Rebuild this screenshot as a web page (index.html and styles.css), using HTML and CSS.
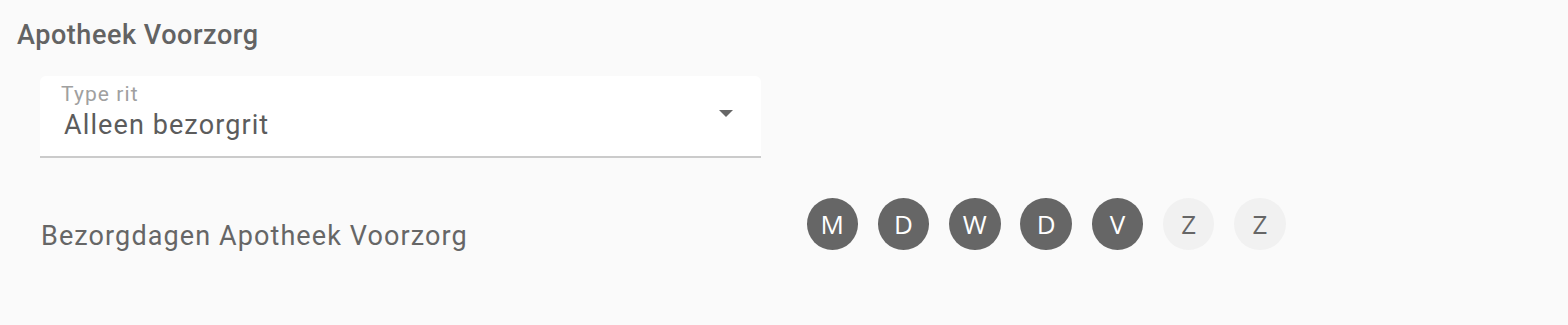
FILE: index.html
```html
<!DOCTYPE html>
<html lang="nl">
<head>
<meta charset="utf-8">
<title>Apotheek Voorzorg</title>
<link rel="stylesheet" href="styles.css">
</head>
<body>
<section class="panel">
  <h2 class="title">Apotheek Voorzorg</h2>
  <div class="field">
    <div class="field-text">
      <span class="field-label">Type rit</span>
      <span class="field-value">Alleen bezorgrit</span>
    </div>
    <svg class="caret" width="14" height="7" viewBox="0 0 14 7"><path d="M0 0h14L7 7z" fill="#666"/></svg>
  </div>
  <div class="days-row">
    <span class="days-label">Bezorgdagen Apotheek Voorzorg</span>
    <div class="days">
      <span class="day on">M</span>
      <span class="day on">D</span>
      <span class="day on">W</span>
      <span class="day on">D</span>
      <span class="day on">V</span>
      <span class="day">Z</span>
      <span class="day">Z</span>
    </div>
  </div>
</section>
</body>
</html>
```
FILE: styles.css
```css
html, body {
  margin: 0;
  padding: 0;
  background: #fafafa;
}
body {
  font-family: Roboto, "Noto Sans", sans-serif;
  color: #666;
  width: 1568px;
  height: 325px;
  overflow: hidden;
}
.panel {
  padding: 19px 0 0 17px;
}
.title {
  margin: 0;
  font-size: 27px;
  font-weight: 500;
  line-height: 32px;
  letter-spacing: 0.55px;
  color: #636363;
}
.field {
  margin: 25px 0 0 23px;
  width: 721px;
  height: 82px;
  box-sizing: border-box;
  background: #fff;
  border-radius: 6px 6px 0 0;
  border-bottom: 2px solid #cbcbcb;
  display: flex;
  align-items: flex-start;
  justify-content: space-between;
  padding: 6px 28px 0 21px;
}
.field-text {
  display: flex;
  flex-direction: column;
}
.field-label {
  font-size: 21px;
  line-height: 24px;
  letter-spacing: 1.1px;
  color: #a0a0a0;
}
.field-value {
  margin: 3px 0 0 3px;
  font-size: 27px;
  line-height: 32px;
  letter-spacing: 1.1px;
  color: #5c5c5c;
}
.caret {
  display: block;
  margin-top: 28px;
}
.days-row {
  display: flex;
  align-items: flex-start;
  margin: 40px 0 0 24px;
}
.days-label {
  width: 765.5px;
  padding-top: 22px;
  font-size: 27px;
  line-height: 32px;
  letter-spacing: 1.1px;
  color: #666;
}
.days {
  display: flex;
  gap: 19.8px;
}
.day {
  width: 51.5px;
  height: 52px;
  border-radius: 50%;
  background: #f1f1f1;
  color: #666;
  font-family: "Open Sans", sans-serif;
  font-size: 26px;
  display: flex;
  align-items: center;
  justify-content: center;
}
.day.on {
  background: #666;
  color: #fff;
}
```
